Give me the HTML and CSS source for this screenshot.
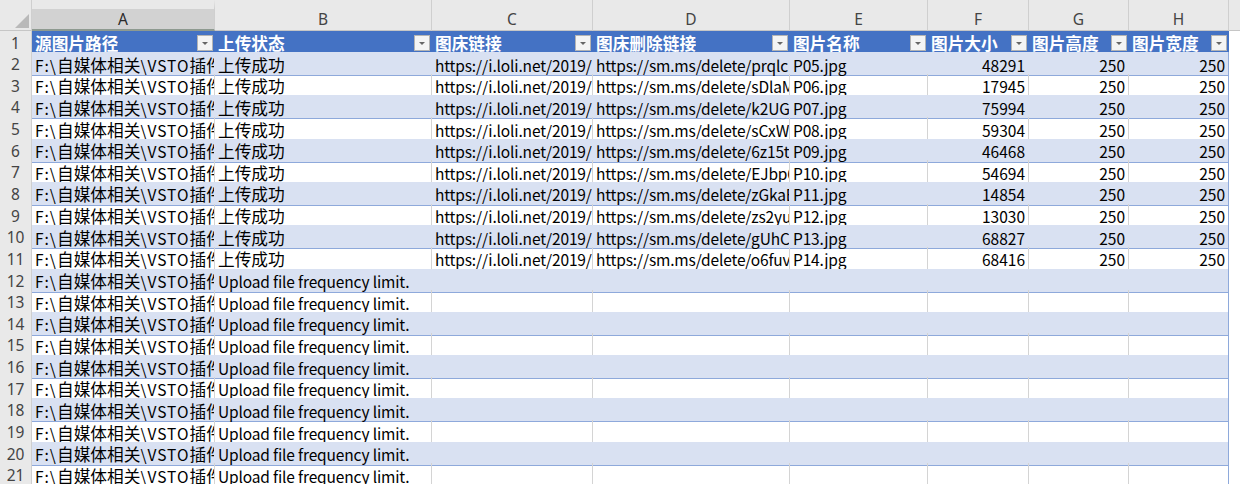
FILE: index.html
```html
<!DOCTYPE html>
<html lang="zh-CN">
<head>
<meta charset="utf-8">
<title>Sheet</title>
<link rel="stylesheet" href="styles.css">
</head>
<body>
<div class="sheet">
  <div class="row colheads">
    <div class="corner"><svg class="tri" width="16" height="16" viewBox="0 0 16 16"><polygon points="15,1 15,15 1,15" fill="#b9b9b9"/></svg></div>
    <div class="ch sel">A</div><div class="ch">B</div><div class="ch">C</div><div class="ch">D</div><div class="ch">E</div><div class="ch">F</div><div class="ch">G</div><div class="ch">H</div><div class="ch last"></div>
  </div>

  <div class="row head">
    <div class="rh">1</div>
    <div class="c h"><span>源图片路径</span><i class="fb"></i></div>
    <div class="c h"><span>上传状态</span><i class="fb"></i></div>
    <div class="c h"><span>图床链接</span><i class="fb"></i></div>
    <div class="c h"><span>图床删除链接</span><i class="fb"></i></div>
    <div class="c h"><span>图片名称</span><i class="fb"></i></div>
    <div class="c h"><span>图片大小</span><i class="fb"></i></div>
    <div class="c h"><span>图片高度</span><i class="fb"></i></div>
    <div class="c h"><span>图片宽度</span><i class="fb"></i></div>
    <div class="c out"></div>
  </div>

  <div class="row band">
    <div class="rh">2</div>
    <div class="c"><span class="la">F:\</span>自媒体相关<span class="la">\VSTO</span>插件开发<span class="la">\</span>图片<span class="la">\P05.jpg</span></div><div class="c">上传成功</div><div class="c l">https://i.loli.net/2019/12/05/aP05.jpg</div><div class="c l">https://sm.ms/delete/prqlcH7fS2aYbN</div><div class="c l">P05.jpg</div><div class="c l n">48291</div><div class="c l n">250</div><div class="c l n">250</div><div class="c out"></div>
  </div>
  <div class="row">
    <div class="rh">3</div>
    <div class="c"><span class="la">F:\</span>自媒体相关<span class="la">\VSTO</span>插件开发<span class="la">\</span>图片<span class="la">\P06.jpg</span></div><div class="c">上传成功</div><div class="c l">https://i.loli.net/2019/12/05/aP06.jpg</div><div class="c l">https://sm.ms/delete/sDlaMk3Tq8Lw</div><div class="c l">P06.jpg</div><div class="c l n">17945</div><div class="c l n">250</div><div class="c l n">250</div><div class="c out"></div>
  </div>
  <div class="row band">
    <div class="rh">4</div>
    <div class="c"><span class="la">F:\</span>自媒体相关<span class="la">\VSTO</span>插件开发<span class="la">\</span>图片<span class="la">\P07.jpg</span></div><div class="c">上传成功</div><div class="c l">https://i.loli.net/2019/12/05/aP07.jpg</div><div class="c l">https://sm.ms/delete/k2UGbR5nW1oE</div><div class="c l">P07.jpg</div><div class="c l n">75994</div><div class="c l n">250</div><div class="c l n">250</div><div class="c out"></div>
  </div>
  <div class="row">
    <div class="rh">5</div>
    <div class="c"><span class="la">F:\</span>自媒体相关<span class="la">\VSTO</span>插件开发<span class="la">\</span>图片<span class="la">\P08.jpg</span></div><div class="c">上传成功</div><div class="c l">https://i.loli.net/2019/12/05/aP08.jpg</div><div class="c l">https://sm.ms/delete/sCxWvJ4mQ7pZ</div><div class="c l">P08.jpg</div><div class="c l n">59304</div><div class="c l n">250</div><div class="c l n">250</div><div class="c out"></div>
  </div>
  <div class="row band">
    <div class="rh">6</div>
    <div class="c"><span class="la">F:\</span>自媒体相关<span class="la">\VSTO</span>插件开发<span class="la">\</span>图片<span class="la">\P09.jpg</span></div><div class="c">上传成功</div><div class="c l">https://i.loli.net/2019/12/05/aP09.jpg</div><div class="c l">https://sm.ms/delete/6z15tYh2Kc9X</div><div class="c l">P09.jpg</div><div class="c l n">46468</div><div class="c l n">250</div><div class="c l n">250</div><div class="c out"></div>
  </div>
  <div class="row">
    <div class="rh">7</div>
    <div class="c"><span class="la">F:\</span>自媒体相关<span class="la">\VSTO</span>插件开发<span class="la">\</span>图片<span class="la">\P10.jpg</span></div><div class="c">上传成功</div><div class="c l">https://i.loli.net/2019/12/05/aP10.jpg</div><div class="c l">https://sm.ms/delete/EJbp6rT3uN8s</div><div class="c l">P10.jpg</div><div class="c l n">54694</div><div class="c l n">250</div><div class="c l n">250</div><div class="c out"></div>
  </div>
  <div class="row band">
    <div class="rh">8</div>
    <div class="c"><span class="la">F:\</span>自媒体相关<span class="la">\VSTO</span>插件开发<span class="la">\</span>图片<span class="la">\P11.jpg</span></div><div class="c">上传成功</div><div class="c l">https://i.loli.net/2019/12/05/aP11.jpg</div><div class="c l">https://sm.ms/delete/zGkaBq7Wd2fH</div><div class="c l">P11.jpg</div><div class="c l n">14854</div><div class="c l n">250</div><div class="c l n">250</div><div class="c out"></div>
  </div>
  <div class="row">
    <div class="rh">9</div>
    <div class="c"><span class="la">F:\</span>自媒体相关<span class="la">\VSTO</span>插件开发<span class="la">\</span>图片<span class="la">\P12.jpg</span></div><div class="c">上传成功</div><div class="c l">https://i.loli.net/2019/12/05/aP12.jpg</div><div class="c l">https://sm.ms/delete/zs2yuM6kP1gL</div><div class="c l">P12.jpg</div><div class="c l n">13030</div><div class="c l n">250</div><div class="c l n">250</div><div class="c out"></div>
  </div>
  <div class="row band">
    <div class="rh">10</div>
    <div class="c"><span class="la">F:\</span>自媒体相关<span class="la">\VSTO</span>插件开发<span class="la">\</span>图片<span class="la">\P13.jpg</span></div><div class="c">上传成功</div><div class="c l">https://i.loli.net/2019/12/05/aP13.jpg</div><div class="c l">https://sm.ms/delete/gUhCx8Rf4Ta</div><div class="c l">P13.jpg</div><div class="c l n">68827</div><div class="c l n">250</div><div class="c l n">250</div><div class="c out"></div>
  </div>
  <div class="row">
    <div class="rh">11</div>
    <div class="c"><span class="la">F:\</span>自媒体相关<span class="la">\VSTO</span>插件开发<span class="la">\</span>图片<span class="la">\P14.jpg</span></div><div class="c">上传成功</div><div class="c l">https://i.loli.net/2019/12/05/aP14.jpg</div><div class="c l">https://sm.ms/delete/o6fuvW9jE3yB</div><div class="c l">P14.jpg</div><div class="c l n">68416</div><div class="c l n">250</div><div class="c l n">250</div><div class="c out"></div>
  </div>

  <div class="row band">
    <div class="rh">12</div>
    <div class="c"><span class="la">F:\</span>自媒体相关<span class="la">\VSTO</span>插件开发<span class="la">\</span>图片<span class="la">\P15.jpg</span></div><div class="c l">Upload file frequency limit.</div><div class="c"></div><div class="c"></div><div class="c"></div><div class="c"></div><div class="c"></div><div class="c"></div><div class="c out"></div>
  </div>
  <div class="row">
    <div class="rh">13</div>
    <div class="c"><span class="la">F:\</span>自媒体相关<span class="la">\VSTO</span>插件开发<span class="la">\</span>图片<span class="la">\P16.jpg</span></div><div class="c l">Upload file frequency limit.</div><div class="c"></div><div class="c"></div><div class="c"></div><div class="c"></div><div class="c"></div><div class="c"></div><div class="c out"></div>
  </div>
  <div class="row band">
    <div class="rh">14</div>
    <div class="c"><span class="la">F:\</span>自媒体相关<span class="la">\VSTO</span>插件开发<span class="la">\</span>图片<span class="la">\P17.jpg</span></div><div class="c l">Upload file frequency limit.</div><div class="c"></div><div class="c"></div><div class="c"></div><div class="c"></div><div class="c"></div><div class="c"></div><div class="c out"></div>
  </div>
  <div class="row">
    <div class="rh">15</div>
    <div class="c"><span class="la">F:\</span>自媒体相关<span class="la">\VSTO</span>插件开发<span class="la">\</span>图片<span class="la">\P18.jpg</span></div><div class="c l">Upload file frequency limit.</div><div class="c"></div><div class="c"></div><div class="c"></div><div class="c"></div><div class="c"></div><div class="c"></div><div class="c out"></div>
  </div>
  <div class="row band">
    <div class="rh">16</div>
    <div class="c"><span class="la">F:\</span>自媒体相关<span class="la">\VSTO</span>插件开发<span class="la">\</span>图片<span class="la">\P19.jpg</span></div><div class="c l">Upload file frequency limit.</div><div class="c"></div><div class="c"></div><div class="c"></div><div class="c"></div><div class="c"></div><div class="c"></div><div class="c out"></div>
  </div>
  <div class="row">
    <div class="rh">17</div>
    <div class="c"><span class="la">F:\</span>自媒体相关<span class="la">\VSTO</span>插件开发<span class="la">\</span>图片<span class="la">\P20.jpg</span></div><div class="c l">Upload file frequency limit.</div><div class="c"></div><div class="c"></div><div class="c"></div><div class="c"></div><div class="c"></div><div class="c"></div><div class="c out"></div>
  </div>
  <div class="row band">
    <div class="rh">18</div>
    <div class="c"><span class="la">F:\</span>自媒体相关<span class="la">\VSTO</span>插件开发<span class="la">\</span>图片<span class="la">\P21.jpg</span></div><div class="c l">Upload file frequency limit.</div><div class="c"></div><div class="c"></div><div class="c"></div><div class="c"></div><div class="c"></div><div class="c"></div><div class="c out"></div>
  </div>
  <div class="row">
    <div class="rh">19</div>
    <div class="c"><span class="la">F:\</span>自媒体相关<span class="la">\VSTO</span>插件开发<span class="la">\</span>图片<span class="la">\P22.jpg</span></div><div class="c l">Upload file frequency limit.</div><div class="c"></div><div class="c"></div><div class="c"></div><div class="c"></div><div class="c"></div><div class="c"></div><div class="c out"></div>
  </div>
  <div class="row band">
    <div class="rh">20</div>
    <div class="c"><span class="la">F:\</span>自媒体相关<span class="la">\VSTO</span>插件开发<span class="la">\</span>图片<span class="la">\P23.jpg</span></div><div class="c l">Upload file frequency limit.</div><div class="c"></div><div class="c"></div><div class="c"></div><div class="c"></div><div class="c"></div><div class="c"></div><div class="c out"></div>
  </div>
  <div class="row">
    <div class="rh">21</div>
    <div class="c"><span class="la">F:\</span>自媒体相关<span class="la">\VSTO</span>插件开发<span class="la">\</span>图片<span class="la">\P24.jpg</span></div><div class="c l">Upload file frequency limit.</div><div class="c"></div><div class="c"></div><div class="c"></div><div class="c"></div><div class="c"></div><div class="c"></div><div class="c out"></div>
  </div>
</div>
</body>
</html>
```

FILE: styles.css
```css
* { box-sizing: border-box; }
html, body { margin: 0; padding: 0; background: #ffffff; }
body {
  font-family: "Noto Sans CJK SC", "Noto Sans", sans-serif;
  font-size: 16.7px;
  color: #000;
  width: 1240px;
  height: 484px;
  overflow: hidden;
}
.sheet {
  --cols: 32px 183px 217px 161px 197px 138px 101px 100px 100px 11px;
  display: flex;
  flex-direction: column;
}
.row {
  display: grid;
  grid-template-columns: var(--cols);
  height: 21.65px;
}
.colheads { height: 30.5px; background: #e9e9e9; }
.corner {
  background: #e9e9e9;
  border-right: 1px solid #cfcfcf;
  border-bottom: 1px solid #c6c6c6;
  display: flex;
  align-items: flex-end;
  justify-content: flex-end;
  padding: 0 1px 1px 0;
}
.tri { display: block; }
.ch {
  border-right: 1px solid #cfcfcf;
  border-bottom: 1px solid #c6c6c6;
  text-align: center;
  color: #444;
  font-family: "Noto Sans", sans-serif;
  font-size: 15.5px;
  line-height: 20px;
  padding-top: 9px;
}
.ch.sel {
  background: #d2d2d2;
  border-top: 9px solid #e9e9e9;
  padding-top: 0;
  line-height: 20px;
  border-bottom: 2px solid #8e9a90;
  color: #2a2a2a;
}
.ch.last { border-right: none; }
.rh {
  background: #e9e9e9;
  border-right: 1px solid #cfcfcf;
  border-bottom: 1px solid #d6d6d6;
  text-align: center;
  color: #444;
  font-family: "Noto Sans", sans-serif;
  font-size: 15.5px;
  line-height: 21px;
  padding-top: 2px;
  overflow: clip;
}
.c {
  white-space: nowrap;
  overflow-x: clip;
  overflow-y: visible;
  padding: 2.5px 3px 0;
  line-height: 20px;
  border-bottom: 1px solid #8ea9db;
  border-right: 1px solid #d4d4d4;
}
.l {
  font-size: 15.5px;
  letter-spacing: -0.15px;
}
.la {
  font-size: 15.5px;
  letter-spacing: 1px;
}
.band .c { background: #d9e1f2; border-right-color: #d9e1f2; }
.row .c:nth-child(9) { border-right-color: #8ea9db; }
.c.n { text-align: right; letter-spacing: 0; }
.c.out, .band .c.out {
  background: #ffffff;
  border-bottom: 1px solid #d4d4d4;
  border-right: none;
}
.head .c.h {
  background: #4472c4;
  color: #ffffff;
  font-weight: bold;
  border-right: none;
  border-bottom: 1px solid #4472c4;
  display: flex;
  align-items: center;
  justify-content: space-between;
  padding: 0 2px 0 3px;
}
.head .c.h span { overflow: hidden; padding-top: 2px; }
.fb {
  flex: none;
  width: 16px;
  height: 16px;
  margin-top: 2px;
  background: #f4f4f4;
  border: 1px solid #b4b4b4;
  position: relative;
}
.fb::after {
  content: "";
  position: absolute;
  left: 4px;
  top: 6px;
  border-left: 3px solid transparent;
  border-right: 3px solid transparent;
  border-top: 3px solid #666;
}
```
